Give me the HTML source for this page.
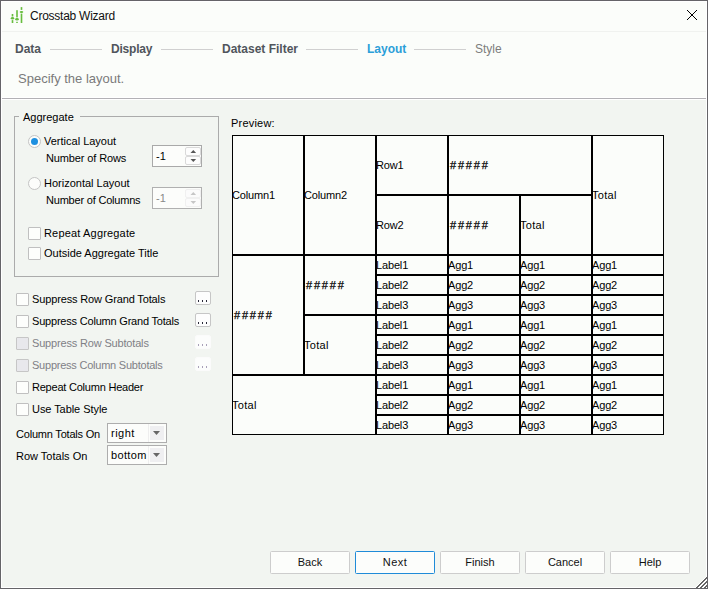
<!DOCTYPE html>
<html><head><meta charset="utf-8">
<style>
*{margin:0;padding:0;box-sizing:border-box}
html,body{width:708px;height:589px;overflow:hidden;background:#f2f5f1}
body{font-family:"Liberation Sans",sans-serif;font-size:11px;color:#000;position:relative}
.a{position:absolute}
.t{position:absolute;white-space:nowrap;line-height:11px;font-size:11px}
#frame{position:absolute;left:0;top:0;width:708px;height:589px;border:1px solid #656468;box-shadow:inset 0 0 0 1px #fff}
#head{position:absolute;left:1px;top:1px;width:706px;height:97px;background:#fbfdfa}
.sep1{position:absolute;left:1px;top:31px;width:706px;height:1px;background:#f0f2ef}
.step{position:absolute;top:43px;font-weight:bold;font-size:12px;line-height:12px;color:#50555c;white-space:nowrap}
.sline{position:absolute;top:49px;height:1px;background:#d0d0d0}
.chk{position:absolute;width:13px;height:13px;border:1px solid #c0c0c0;border-radius:1px;background:#fdfefc}
.chk.dis{background:#e8e8ec;border-color:#c6c6c6}
.rad{position:absolute;width:13px;height:13px;border:1px solid #c4c4c4;border-radius:50%;background:#fcfdfb}
.dots{position:absolute;width:16px;height:14px;border:1px solid #c6c6c6;border-radius:2px;background:#fdfdfd}
.dots.dis{border-color:#fbfbfb;background:#fcfdfc}
.dots i{position:absolute;top:8px;width:1.8px;height:2px;background:#2a2a3a}
.dots.dis i{background:#a8a0b8}
.btn{position:absolute;top:551px;width:80px;height:23px;border:1px solid #cdcdcd;border-radius:1.5px;background:#fcfdfb;text-align:center;font-size:11px;line-height:21px;color:#111}
.btn.def{border-color:#1f8bd8}
table{position:absolute;left:232px;top:135px;border-collapse:separate;border-spacing:0;table-layout:fixed;background:#fbfdfa}
td{border:1px solid #000;padding:0;text-indent:-1px;letter-spacing:-0.15px;font-size:11px;line-height:11px;vertical-align:middle;text-align:left;white-space:nowrap;overflow:hidden;color:#000}
td.h{letter-spacing:1.8px;text-indent:1px;-webkit-text-stroke:0.25px #000}
td.tt{letter-spacing:0.3px}
</style></head><body>
<div id="head"></div>
<div class="sep1"></div>
<div id="frame"></div>

<!-- title -->
<svg class="a" style="left:8px;top:4px" width="18" height="22" viewBox="0 0 18 22">
 <g fill="#66bd3e">
  <rect x="3.7" y="10" width="1.6" height="2.5"/><ellipse cx="4.5" cy="14.2" rx="1.7" ry="1.2"/><rect x="3.7" y="16.1" width="1.6" height="2.9"/>
  <rect x="8.2" y="6.2" width="1.6" height="7.2"/><ellipse cx="9" cy="15.3" rx="1.8" ry="1.3"/><rect x="8.2" y="17.8" width="1.6" height="1.2"/>
  <rect x="12.7" y="3.1" width="1.6" height="2.8"/><ellipse cx="13.5" cy="8" rx="1.8" ry="1.1"/><rect x="12.7" y="9.6" width="1.6" height="9.4"/>
 </g>
</svg>
<div class="t" style="left:30px;top:10px;font-size:12px;line-height:12px;color:#111;letter-spacing:-0.25px">Crosstab Wizard</div>
<svg class="a" style="left:687px;top:10px" width="10" height="10" shape-rendering="crispEdges"><g fill="#000"><rect x="0" y="0" width="1" height="1"/><rect x="9" y="0" width="1" height="1"/><rect x="1" y="1" width="1" height="1"/><rect x="8" y="1" width="1" height="1"/><rect x="2" y="2" width="1" height="1"/><rect x="7" y="2" width="1" height="1"/><rect x="3" y="3" width="1" height="1"/><rect x="6" y="3" width="1" height="1"/><rect x="4" y="4" width="1" height="1"/><rect x="5" y="4" width="1" height="1"/><rect x="5" y="5" width="1" height="1"/><rect x="4" y="5" width="1" height="1"/><rect x="6" y="6" width="1" height="1"/><rect x="3" y="6" width="1" height="1"/><rect x="7" y="7" width="1" height="1"/><rect x="2" y="7" width="1" height="1"/><rect x="8" y="8" width="1" height="1"/><rect x="1" y="8" width="1" height="1"/><rect x="9" y="9" width="1" height="1"/><rect x="0" y="9" width="1" height="1"/></g></svg>

<!-- steps -->
<div class="step" style="left:15px">Data</div>
<div class="sline" style="left:50px;width:52px"></div>
<div class="step" style="left:111px;letter-spacing:-0.2px">Display</div>
<div class="sline" style="left:161px;width:52px"></div>
<div class="step" style="left:222px">Dataset Filter</div>
<div class="sline" style="left:306px;width:52px"></div>
<div class="step" style="left:367px;color:#2b9fd9">Layout</div>
<div class="sline" style="left:414px;width:52px"></div>
<div class="step" style="left:475px;font-weight:normal;color:#7d7d7d">Style</div>
<div class="t" style="left:18px;top:72px;font-size:13px;line-height:13px;color:#7a7a7a">Specify the layout.</div>

<div class="a" style="left:2px;top:97px;width:704px;height:1px;background:#fff"></div>
<div class="a" style="left:2px;top:98px;width:704px;height:1px;background:#b2b1b5"></div>
<div class="a" style="left:2px;top:99px;width:704px;height:1px;background:#fff"></div>

<!-- group box -->
<div class="a" style="left:14px;top:116px;width:205px;height:161px;border:1px solid #ababab"></div>
<div class="a" style="left:19px;top:110px;width:61px;height:12px;background:#f2f5f1"></div>
<div class="t" style="left:23px;top:112px">Aggregate</div>

<div class="rad" style="left:28px;top:135px"></div>
<div class="a" style="left:31px;top:138px;width:7px;height:7px;border-radius:50%;background:#1e90e0"></div>
<div class="t" style="left:44px;top:136px">Vertical Layout</div>
<div class="t" style="letter-spacing:-0.12px;left:46px;top:153px">Number of Rows</div>
<div class="a" style="left:152px;top:145px;width:50px;height:22px;border:1px solid #a9a9a9;background:#fcfdfb"></div>
<div class="t" style="left:156px;top:151px">-1</div>
<div class="a" style="left:185px;top:147px;width:16px;height:9px;border:1px solid #d9d9d9;border-radius:2px;background:#fdfdfd"></div>
<div class="a" style="left:185px;top:156px;width:16px;height:9px;border:1px solid #d9d9d9;border-radius:2px;background:#fdfdfd"></div>
<svg class="a" style="left:185px;top:147px" width="16" height="18"><path d="M5.5 6h5.6L8.3 3z" fill="#555"/><path d="M5.5 12h5.6L8.3 15z" fill="#555"/></svg>

<div class="rad" style="left:28px;top:177px"></div>
<div class="t" style="left:44px;top:178px">Horizontal Layout</div>
<div class="t" style="letter-spacing:-0.20px;left:46px;top:195px">Number of Columns</div>
<div class="a" style="left:152px;top:187px;width:50px;height:22px;border:1px solid #b0b0b0;background:#fcfdfb"></div>
<div class="t" style="left:156px;top:193px;color:#888">-1</div>
<div class="a" style="left:185px;top:189px;width:16px;height:9px;border:1px solid #f0f0f0;border-radius:2px;background:#fbfbfb"></div>
<div class="a" style="left:185px;top:198px;width:16px;height:9px;border:1px solid #f0f0f0;border-radius:2px;background:#fbfbfb"></div>
<svg class="a" style="left:185px;top:189px" width="16" height="18"><path d="M5.5 6h5.6L8.3 3z" fill="#c6c6c6"/><path d="M5.5 12h5.6L8.3 15z" fill="#c6c6c6"/></svg>

<div class="chk" style="left:28px;top:227px"></div>
<div class="t" style="letter-spacing:0.17px;left:44px;top:228px">Repeat Aggregate</div>
<div class="chk" style="left:28px;top:247px"></div>
<div class="t" style="left:44px;top:248px">Outside Aggregate Title</div>

<!-- lower options -->
<div class="chk" style="left:16px;top:293px"></div>
<div class="t" style="letter-spacing:-0.14px;left:32px;top:294px">Suppress Row Grand Totals</div>
<div class="dots" style="left:195px;top:291px"><i style="left:1.6px"></i><i style="left:5.6px"></i><i style="left:9.6px"></i></div>
<div class="chk" style="left:16px;top:315px"></div>
<div class="t" style="letter-spacing:-0.20px;left:32px;top:316px">Suppress Column Grand Totals</div>
<div class="dots" style="left:195px;top:313px"><i style="left:1.6px"></i><i style="left:5.6px"></i><i style="left:9.6px"></i></div>
<div class="chk dis" style="left:16px;top:337px"></div>
<div class="t" style="letter-spacing:-0.17px;left:32px;top:338px;color:#808086">Suppress Row Subtotals</div>
<div class="dots dis" style="left:195px;top:335px"><i style="left:1.6px"></i><i style="left:5.6px"></i><i style="left:9.6px"></i></div>
<div class="chk dis" style="left:16px;top:359px"></div>
<div class="t" style="letter-spacing:-0.23px;left:32px;top:360px;color:#808086">Suppress Column Subtotals</div>
<div class="dots dis" style="left:195px;top:357px"><i style="left:1.6px"></i><i style="left:5.6px"></i><i style="left:9.6px"></i></div>
<div class="chk" style="left:16px;top:381px"></div>
<div class="t" style="letter-spacing:-0.22px;left:32px;top:382px">Repeat Column Header</div>
<div class="chk" style="left:16px;top:403px"></div>
<div class="t" style="letter-spacing:-0.06px;left:32px;top:404px">Use Table Style</div>

<div class="t" style="letter-spacing:-0.20px;left:16px;top:429px">Column Totals On</div>
<div class="a" style="left:107px;top:423px;width:60px;height:20px;border:1px solid #adadad;background:#fcfdfb"></div>
<div class="a" style="left:148px;top:424px;width:1px;height:18px;background:#eeeeee"></div><div class="a" style="left:150px;top:426px;width:14px;height:14px;background:#efeff1"></div>
<svg class="a" style="left:153px;top:431px" width="7" height="4"><path d="M0 0h7L3.5 4z" fill="#666"/></svg>
<div class="t" style="left:111px;top:428px;letter-spacing:0.5px">right</div>
<div class="t" style="left:16px;top:451px">Row Totals On</div>
<div class="a" style="left:107px;top:445px;width:60px;height:20px;border:1px solid #adadad;background:#fcfdfb"></div>
<div class="a" style="left:148px;top:446px;width:1px;height:18px;background:#eeeeee"></div><div class="a" style="left:150px;top:448px;width:14px;height:14px;background:#efeff1"></div>
<svg class="a" style="left:153px;top:453px" width="7" height="4"><path d="M0 0h7L3.5 4z" fill="#666"/></svg>
<div class="t" style="left:111px;top:450px;letter-spacing:0.35px">bottom</div>

<!-- preview -->
<div class="t" style="left:231px;top:118px;letter-spacing:0.2px">Preview:</div>
<table>
<colgroup><col style="width:72px"><col style="width:72px"><col style="width:72px"><col style="width:72px"><col style="width:72px"><col style="width:72px"></colgroup>
<tr style="height:60px"><td rowspan="2">Column1</td><td rowspan="2">Column2</td><td>Row1</td><td colspan="2" class="h">#####</td><td rowspan="2" class="tt">Total</td></tr>
<tr style="height:60px"><td>Row2</td><td class="h">#####</td><td class="tt">Total</td></tr>
<tr style="height:20px"><td rowspan="6" class="h">#####</td><td rowspan="3" class="h">#####</td><td>Label1</td><td>Agg1</td><td>Agg1</td><td>Agg1</td></tr>
<tr style="height:20px"><td>Label2</td><td>Agg2</td><td>Agg2</td><td>Agg2</td></tr>
<tr style="height:20px"><td>Label3</td><td>Agg3</td><td>Agg3</td><td>Agg3</td></tr>
<tr style="height:20px"><td rowspan="3" class="tt">Total</td><td>Label1</td><td>Agg1</td><td>Agg1</td><td>Agg1</td></tr>
<tr style="height:20px"><td>Label2</td><td>Agg2</td><td>Agg2</td><td>Agg2</td></tr>
<tr style="height:20px"><td>Label3</td><td>Agg3</td><td>Agg3</td><td>Agg3</td></tr>
<tr style="height:20px"><td rowspan="3" colspan="2" class="tt">Total</td><td>Label1</td><td>Agg1</td><td>Agg1</td><td>Agg1</td></tr>
<tr style="height:20px"><td>Label2</td><td>Agg2</td><td>Agg2</td><td>Agg2</td></tr>
<tr style="height:20px"><td>Label3</td><td>Agg3</td><td>Agg3</td><td>Agg3</td></tr>
</table>

<!-- buttons -->
<div class="btn" style="left:270px">Back</div>
<div class="btn def" style="left:355px;letter-spacing:0.5px">Next</div>
<div class="btn" style="left:440px">Finish</div>
<div class="btn" style="left:525px">Cancel</div>
<div class="btn" style="left:610px">Help</div>

<svg class="a" style="left:694px;top:575px" width="14" height="14" shape-rendering="crispEdges"><rect x="1" y="12" width="1" height="1" fill="#fff"/><rect x="2" y="11" width="1" height="1" fill="#fff"/><rect x="2" y="12" width="1" height="1" fill="#666"/><rect x="3" y="10" width="1" height="1" fill="#fff"/><rect x="3" y="11" width="1" height="1" fill="#666"/><rect x="3" y="12" width="1" height="1" fill="#666"/><rect x="4" y="9" width="1" height="1" fill="#fff"/><rect x="4" y="10" width="1" height="1" fill="#666"/><rect x="4" y="11" width="1" height="1" fill="#666"/><rect x="4" y="12" width="1" height="1" fill="#fff"/><rect x="5" y="8" width="1" height="1" fill="#fff"/><rect x="5" y="9" width="1" height="1" fill="#666"/><rect x="5" y="10" width="1" height="1" fill="#666"/><rect x="5" y="11" width="1" height="1" fill="#fff"/><rect x="5" y="12" width="1" height="1" fill="#fff"/><rect x="6" y="7" width="1" height="1" fill="#fff"/><rect x="6" y="8" width="1" height="1" fill="#666"/><rect x="6" y="9" width="1" height="1" fill="#666"/><rect x="6" y="10" width="1" height="1" fill="#fff"/><rect x="6" y="11" width="1" height="1" fill="#fff"/><rect x="6" y="12" width="1" height="1" fill="#666"/><rect x="7" y="6" width="1" height="1" fill="#fff"/><rect x="7" y="7" width="1" height="1" fill="#666"/><rect x="7" y="8" width="1" height="1" fill="#666"/><rect x="7" y="9" width="1" height="1" fill="#fff"/><rect x="7" y="10" width="1" height="1" fill="#fff"/><rect x="7" y="11" width="1" height="1" fill="#666"/><rect x="7" y="12" width="1" height="1" fill="#666"/><rect x="8" y="5" width="1" height="1" fill="#fff"/><rect x="8" y="6" width="1" height="1" fill="#666"/><rect x="8" y="7" width="1" height="1" fill="#666"/><rect x="8" y="8" width="1" height="1" fill="#fff"/><rect x="8" y="9" width="1" height="1" fill="#fff"/><rect x="8" y="10" width="1" height="1" fill="#666"/><rect x="8" y="11" width="1" height="1" fill="#666"/><rect x="8" y="12" width="1" height="1" fill="#fff"/><rect x="9" y="4" width="1" height="1" fill="#fff"/><rect x="9" y="5" width="1" height="1" fill="#666"/><rect x="9" y="6" width="1" height="1" fill="#666"/><rect x="9" y="7" width="1" height="1" fill="#fff"/><rect x="9" y="8" width="1" height="1" fill="#fff"/><rect x="9" y="9" width="1" height="1" fill="#666"/><rect x="9" y="10" width="1" height="1" fill="#666"/><rect x="9" y="11" width="1" height="1" fill="#fff"/><rect x="9" y="12" width="1" height="1" fill="#fff"/><rect x="10" y="3" width="1" height="1" fill="#fff"/><rect x="10" y="4" width="1" height="1" fill="#666"/><rect x="10" y="5" width="1" height="1" fill="#666"/><rect x="10" y="6" width="1" height="1" fill="#fff"/><rect x="10" y="7" width="1" height="1" fill="#fff"/><rect x="10" y="8" width="1" height="1" fill="#666"/><rect x="10" y="9" width="1" height="1" fill="#666"/><rect x="10" y="10" width="1" height="1" fill="#fff"/><rect x="10" y="11" width="1" height="1" fill="#fff"/><rect x="10" y="12" width="1" height="1" fill="#666"/><rect x="11" y="2" width="1" height="1" fill="#fff"/><rect x="11" y="3" width="1" height="1" fill="#666"/><rect x="11" y="4" width="1" height="1" fill="#666"/><rect x="11" y="5" width="1" height="1" fill="#fff"/><rect x="11" y="6" width="1" height="1" fill="#fff"/><rect x="11" y="7" width="1" height="1" fill="#666"/><rect x="11" y="8" width="1" height="1" fill="#666"/><rect x="11" y="9" width="1" height="1" fill="#fff"/><rect x="11" y="10" width="1" height="1" fill="#fff"/><rect x="11" y="11" width="1" height="1" fill="#666"/><rect x="11" y="12" width="1" height="1" fill="#666"/><rect x="12" y="1" width="1" height="1" fill="#fff"/><rect x="12" y="2" width="1" height="1" fill="#666"/><rect x="12" y="3" width="1" height="1" fill="#666"/><rect x="12" y="4" width="1" height="1" fill="#fff"/><rect x="12" y="5" width="1" height="1" fill="#fff"/><rect x="12" y="6" width="1" height="1" fill="#666"/><rect x="12" y="7" width="1" height="1" fill="#666"/><rect x="12" y="8" width="1" height="1" fill="#fff"/><rect x="12" y="9" width="1" height="1" fill="#fff"/><rect x="12" y="10" width="1" height="1" fill="#666"/><rect x="12" y="11" width="1" height="1" fill="#666"/><rect x="12" y="12" width="1" height="1" fill="#fff"/></svg>
</body></html>
